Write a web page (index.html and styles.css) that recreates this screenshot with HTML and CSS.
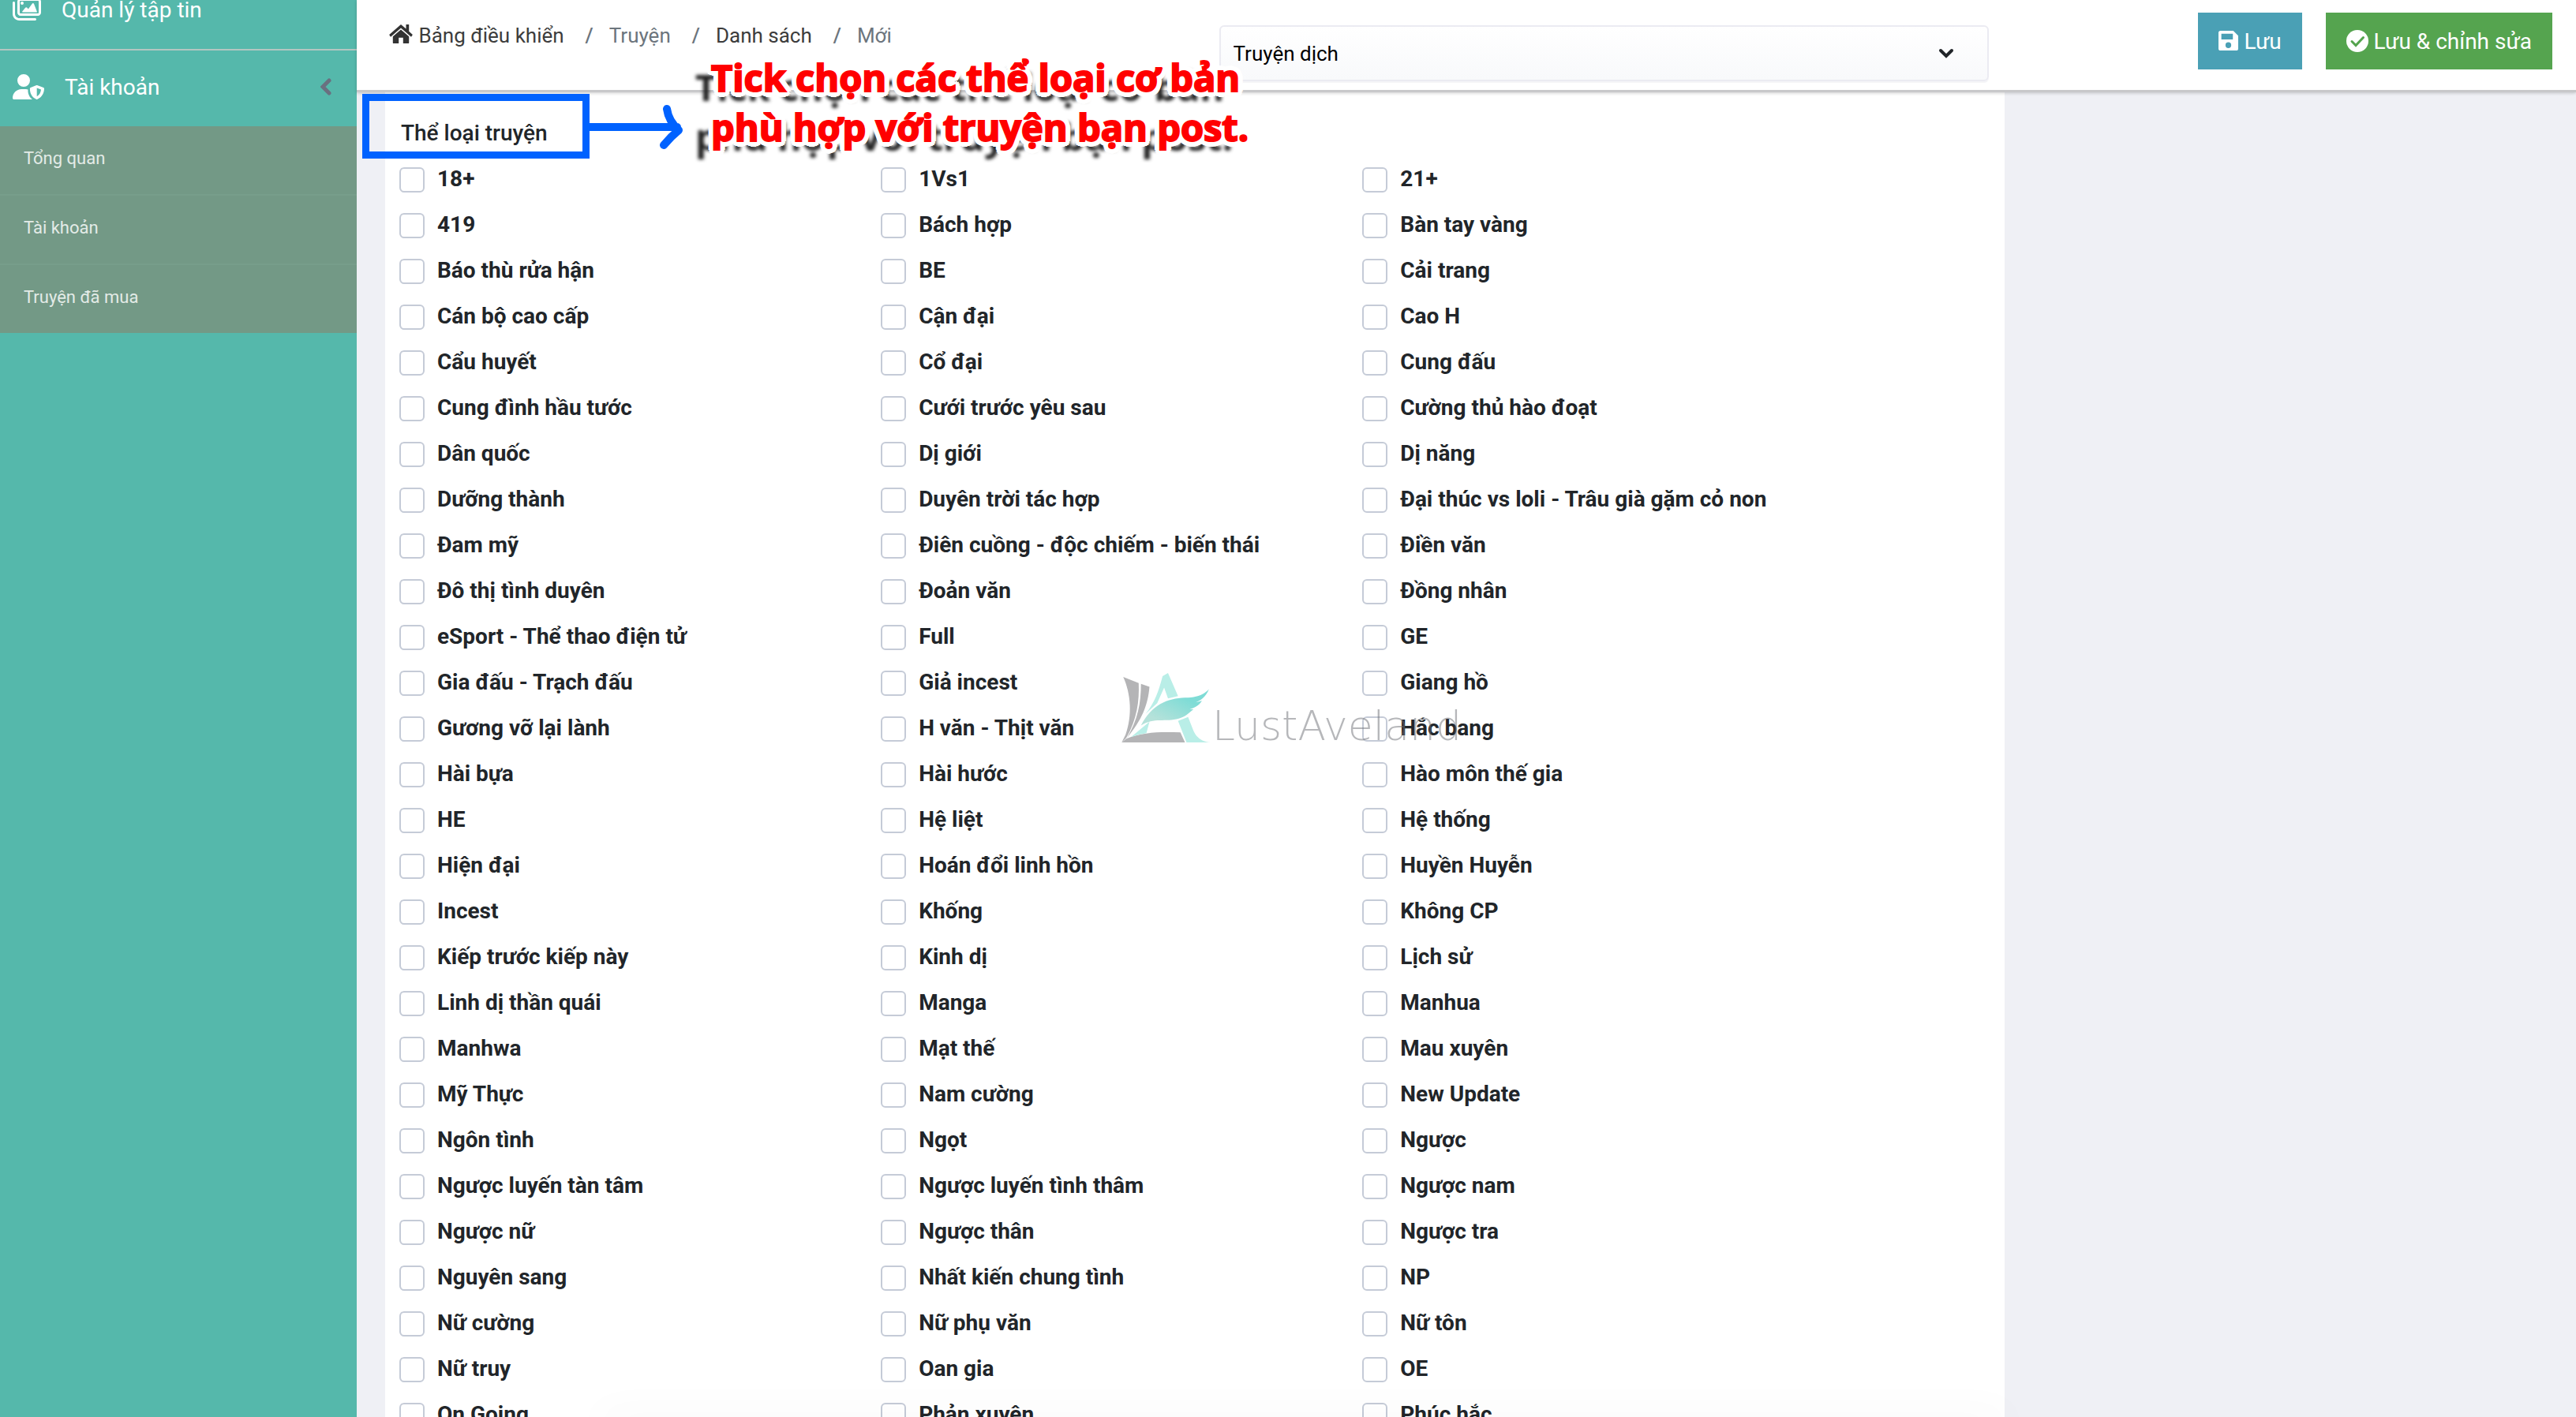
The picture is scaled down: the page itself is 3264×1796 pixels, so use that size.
FILE: index.html
```html
<!DOCTYPE html>
<html lang="vi">
<head>
    <meta charset="UTF-8">
    <meta name="viewport" content="width=device-width, initial-scale=1.0">
    <title>Thể loại truyện</title>
    <link rel="stylesheet" href="styles.css">
</head>
<body>

    <!-- Sidebar -->
    <nav class="sidebar">
        <a class="menu-item menu-files" href="#">
            <svg class="menu-icon" viewBox="0 0 576 512"><path d="M160 32c-35.300 0-64 28.700-64 64V320c0 35.300 28.700 64 64 64H512c35.300 0 64-28.700 64-64V96c0-35.300-28.700-64-64-64H160zm0 48H512c9 0 16 7 16 16V320c0 9-7 16-16 16H160c-9 0-16-7-16-16V96c0-9 7-16 16-16zM396 138.700l-80 108-22-27c-9-11-27-11-36 0l-62 77c-5 7-2 15 6 15H484c8 0 12-8 8-15L432 138.700c-9-13-27-13-36 0zM192 160a32 32 0 1 0 0-64 32 32 0 1 0 0 64zM48 120c0-13.300-10.700-24-24-24S0 106.700 0 120V344c0 75 61 136 136 136H456c13 0 24-11 24-24s-11-24-24-24H136c-49 0-88-39-88-88V120z"/></svg>
            <span>Quản lý tập tin</span>
        </a>
        <a class="menu-item" href="#">
            <svg class="menu-icon menu-icon-user" viewBox="0 0 640 512"><path d="M224 256A128 128 0 1 0 224 0a128 128 0 1 0 0 256zm-46 48C80 304 0 384 0 482c0 17 13 30 30 30H392c11 0 3 0 8-1-65-44-95-126-88-198-13-6-28-9-42-9H178zM497 225c-4-1-9-1-13 0L365 271c-9 4-15 12-15 22 0 78 28 173 128 215 8 4 17 4 25 0 100-42 137-137 137-215 0-10-6-18-15-22L497 225zM576 312c-6 55-28 110-85 141V279l85 33z"/></svg>
            <span>Tài khoản</span>
            <svg class="menu-arrow" viewBox="0 0 14 22"><path d="M11 3L3 11l8 8"/></svg>
        </a>
        <ul class="submenu">
            <li><a href="#">Tổng quan</a></li>
            <li><a href="#">Tài khoản</a></li>
            <li><a href="#">Truyện đã mua</a></li>
        </ul>
    </nav>

    <div class="page">
        <!-- Top bar -->
        <header class="topbar">
            <div class="topbar-left">
                <ol class="breadcrumb">
                    <li><a href="#"><svg class="home-icon" viewBox="0 0 32 28"><path d="M16 1L0 15l2 3L16 6l14 12 2-3-5-4.500V1h-4v6z"/><path d="M16 8L5 17.500V26q0 1 1 1h7v-8h6v8h7q1 0 1-1v-8.500z"/></svg> Bảng điều khiển</a></li>
                    <li>Truyện</li>
                    <li><a href="#">Danh sách</a></li>
                    <li>Mới</li>
                </ol>
                <div class="select-wrap">
                    <select class="type-select" aria-label="Loại truyện">
                        <option>Truyện dịch</option>
                    </select>
                    <svg class="select-arrow" viewBox="0 0 20 14"><path d="M3 3l7 7 7-7"/></svg>
                </div>
            </div>
            <div class="actions">
                <button class="btn btn-info" type="button"><svg class="btn-icon" viewBox="0 0 24 24"><path fill-rule="evenodd" d="M2.500 0H18l6 6v15.500a2.500 2.500 0 0 1-2.500 2.500h-19A2.500 2.500 0 0 1 0 21.500v-19A2.500 2.500 0 0 1 2.500 0zM3.500 3.500v7h14v-7zM12 14a3.500 3.500 0 1 0 0 7 3.500 3.500 0 0 0 0-7z"/></svg> Lưu</button>
                <button class="btn btn-success" type="button"><svg class="btn-icon btn-icon-check" viewBox="0 0 28 28"><circle cx="14" cy="14" r="14"/><path class="check" d="M7 14.500l5 5 9.500-10"/></svg> Lưu &amp; chỉnh sửa</button>
            </div>
        </header>

        <main class="content">
            <section class="card">
                <h2 class="card-title">Thể loại truyện</h2>
                <div class="categories" id="categories"></div>
            </section>
        </main>
    </div>

    <div class="bottom-shadow"></div>

    <!-- Notes drawn over the page -->
    <div class="note-box"></div>
    <svg class="note-arrow" viewBox="0 0 130 76"><path d="M4 38H120M107 15Q109 30 122 42Q112 50 103 61"/></svg>
    <p class="note-text">Tick chọn các thể loại cơ bản<br>phù hợp với truyện bạn post.</p>

    <div class="watermark">
        <svg class="watermark-logo" viewBox="0 0 116 92">
            <defs>
                <linearGradient id="wing" x1="0" y1="1" x2="1" y2="0">
                    <stop offset="0.2" stop-color="#b5e2da"/>
                    <stop offset="0.7" stop-color="#7fdcd6"/>
                </linearGradient>
            </defs>
            <g fill="#b4b4b6">
                <path d="M2 5l20 8c1 23-2 47-16 71L0 90l5-10C14 55 12 27 2 5z"/>
                <path d="M25 14l11 4c-2 24-10 43-29 66 14-24 18-45 18-70z"/>
                <path d="M0 90l6-5c22-9 47-9 70-8l6 13z"/>
            </g>
            <path fill="#b9eee7" d="M53 4l7-4 13 30-13 3-5-14-9 20-15 14C43 38 48 23 53 4zM12 83l24-20-4 15c-7 1-14 3-20 5zM73 62l13-5 7 18c4 9 11 14 22 15H84z"/>
            <path fill="url(#wing)" d="M25 68C39 41 59 33 82 32c15 0 25-4 31-11-3 8-9 14-17 17l8-2c-4 6-9 9-16 11h5c-6 5-11 10-19 12-17 5-32-2-49 9z"/>
        </svg>
        <span>LustAveland</span>
    </div>

    <script src="script.js"></script>
</body>
</html>
```
FILE: styles.css
```css
/* General Styles */
* {
    box-sizing: border-box;
}

body {
    margin: 0;
    display: flex;
    height: 100vh;
    overflow: hidden;
    font-family: Roboto, "Liberation Sans", sans-serif;
    font-size: 26px;
    color: #212529;
    background-color: #eff0f5;
}

a {
    color: inherit;
    text-decoration: none;
}

/* Sidebar */
.sidebar {
    flex: 0 0 452px;
    background-color: #55b8ab;
    color: white;
}

.menu-item {
    display: flex;
    align-items: center;
    height: 96px;
    padding: 0 32px 4px 16px;
    font-size: 28px;
}

.menu-files {
    height: 64px;
    padding-bottom: 38px;
    border-bottom: 2px solid #b3c6c1;
}

.menu-icon {
    width: 36px;
    height: 32px;
    margin-right: 26px;
    fill: white;
}

.menu-icon-user {
    width: 40px;
}

.menu-arrow {
    width: 14px;
    height: 22px;
    margin-left: auto;
    fill: none;
    stroke: #6a7080;
    stroke-width: 5;
    stroke-linecap: round;
}

.submenu {
    margin: 0;
    padding: 0;
    list-style: none;
    background-color: #739986;
    font-size: 22px;
    color: #e3ebe7;
}

.submenu a {
    display: block;
    height: 88px;
    padding: 0 30px;
    line-height: 82px;
    border-bottom: 2px solid #779e8b;
}

.submenu li:last-child a {
    height: 86px;
    border-bottom: none;
}

/* Top bar */
.page {
    flex: 1;
    min-width: 0;
}

.topbar,
.content {
    display: grid;
    grid-template-columns: 17fr 6fr;
    padding-left: 36px;
}

.topbar {
    position: relative;
    height: 117px;
    background-color: white;
    border-bottom: 3px solid #c8c8ca;
    box-shadow: 0 1px 4px rgba(0, 0, 0, 0.2);
}

.topbar-left {
    display: flex;
    justify-content: space-between;
    padding-right: 20px;
}

.breadcrumb {
    display: flex;
    margin: 0;
    padding: 29px 0 0 4px;
    list-style: none;
    line-height: 32px;
    color: #6c757d;
}

.breadcrumb a {
    color: #3c3c3c;
}

.breadcrumb li + li::before {
    content: "/";
    padding: 0 20px 0 27px;
    font-weight: 500;
}

.home-icon {
    width: 32px;
    height: 26px;
    vertical-align: -2px;
    fill: #333;
}

.select-wrap {
    position: relative;
    width: 48%;
    margin-top: 32px;
}

.type-select {
    width: 100%;
    height: 71px;
    padding: 0 16px;
    font: inherit;
    color: black;
    appearance: none;
    background: linear-gradient(white, #f8f9fb);
    border: 2px solid #ebebf2;
    border-radius: 6px;
    box-shadow: 0 2px 1px #f4f4f7;
}

.select-arrow {
    position: absolute;
    right: 44px;
    top: 29px;
    width: 20px;
    height: 14px;
    fill: none;
    stroke: #212529;
    stroke-width: 4;
    stroke-linecap: round;
}

/* Buttons */
.actions {
    display: flex;
    justify-content: flex-end;
    gap: 30px;
    padding: 16px 30px 0 0;
}

.btn {
    height: 72px;
    padding: 0 26px;
    border: none;
    font: inherit;
    font-size: 28px;
    color: white;
    cursor: pointer;
}

.btn-info {
    background-color: #4aa0b5;
}

.btn-success {
    background-color: #55a44f;
}

.btn-icon {
    width: 25px;
    height: 25px;
    vertical-align: -2px;
    fill: white;
}

.btn-icon-check {
    width: 28px;
    height: 28px;
    vertical-align: -4px;
}

.check {
    fill: none;
    stroke: #55a44f;
    stroke-width: 3;
    stroke-linecap: round;
}

/* Category list */
.card {
    padding: 36px 0 0 18px;
    background-color: white;
}

.card-title {
    margin: 0 0 20px;
    padding-left: 2px;
    font-size: 28px;
    font-weight: 500;
    line-height: 32px;
}

.categories {
    display: grid;
    grid-template-columns: repeat(3, 30%);
    grid-auto-rows: 58px;
}

.category {
    display: flex;
    align-items: flex-start;
    gap: 16px;
    padding-top: 7px;
    font-size: 28px;
    font-weight: bold;
    line-height: 30px;
}

.category input {
    flex: none;
    width: 32px;
    height: 32px;
    margin: 0;
    appearance: none;
    background-color: white;
    border: 2px solid #c5cbd7;
    border-radius: 6px;
}

.category input:checked {
    background-color: #55b8ab;
}

.bottom-shadow {
    position: fixed;
    left: 760px;
    right: 720px;
    bottom: -10px;
    height: 10px;
    box-shadow: 0 0 50px rgba(0, 0, 0, 0.08);
    pointer-events: none;
}

/* Notes */
.note-box {
    position: absolute;
    left: 459px;
    top: 119px;
    width: 288px;
    height: 82px;
    border: 9px solid #0062ff;
}

.note-arrow {
    position: absolute;
    left: 738px;
    top: 123px;
    width: 130px;
    height: 76px;
    fill: none;
    stroke: #0062ff;
    stroke-width: 10;
    stroke-linecap: round;
    stroke-linejoin: round;
}

/* White outline around the letters, then the dark shadow below it */
.note-text {
    position: absolute;
    left: 901px;
    top: 67px;
    margin: 0;
    font-family: "Open Sans", "Noto Sans", sans-serif;
    font-size: 47px;
    font-weight: bold;
    line-height: 63px;
    white-space: nowrap;
    color: red;
    -webkit-text-stroke: 2px red;
    text-shadow:
        7px 0 white, -7px 0 white, 0 7px white, 0 -7px white,
        5px 5px white, -5px 5px white, 5px -5px white, -5px -5px white,
        6px 3px white, -6px 3px white, 6px -3px white, -6px -3px white,
        3px 6px white, -3px 6px white, 3px -6px white, -3px -6px white,
        3px 3px white, -3px 3px white,
        -20px 12px 4px #222;
}

/* Watermark */
.watermark {
    position: absolute;
    left: 1420px;
    top: 853px;
    display: flex;
    align-items: flex-end;
    font-family: "DejaVu Sans", sans-serif;
    font-size: 52px;
    font-weight: 200;
    line-height: 46px;
    color: rgba(110, 112, 118, 0.5);
    pointer-events: none;
}

.watermark-logo {
    width: 116px;
    height: 90px;
}
```
FILE: script.js
```javascript
const categories = [
    "18+", "1Vs1", "21+",
    "419", "Bách hợp", "Bàn tay vàng",
    "Báo thù rửa hận", "BE", "Cải trang",
    "Cán bộ cao cấp", "Cận đại", "Cao H",
    "Cẩu huyết", "Cổ đại", "Cung đấu",
    "Cung đình hầu tước", "Cưới trước yêu sau", "Cường thủ hào đoạt",
    "Dân quốc", "Dị giới", "Dị năng",
    "Dưỡng thành", "Duyên trời tác hợp", "Đại thúc vs loli - Trâu già gặm cỏ non",
    "Đam mỹ", "Điên cuồng - độc chiếm - biến thái", "Điền văn",
    "Đô thị tình duyên", "Đoản văn", "Đồng nhân",
    "eSport - Thể thao điện tử", "Full", "GE",
    "Gia đấu - Trạch đấu", "Giả incest", "Giang hồ",
    "Gương vỡ lại lành", "H văn - Thịt văn", "Hắc bang",
    "Hài bựa", "Hài hước", "Hào môn thế gia",
    "HE", "Hệ liệt", "Hệ thống",
    "Hiện đại", "Hoán đổi linh hồn", "Huyền Huyễn",
    "Incest", "Khống", "Không CP",
    "Kiếp trước kiếp này", "Kinh dị", "Lịch sử",
    "Linh dị thần quái", "Manga", "Manhua",
    "Manhwa", "Mạt thế", "Mau xuyên",
    "Mỹ Thực", "Nam cường", "New Update",
    "Ngôn tình", "Ngọt", "Ngược",
    "Ngược luyến tàn tâm", "Ngược luyến tình thâm", "Ngược nam",
    "Ngược nữ", "Ngược thân", "Ngược tra",
    "Nguyên sang", "Nhất kiến chung tình", "NP",
    "Nữ cường", "Nữ phụ văn", "Nữ tôn",
    "Nữ truy", "Oan gia", "OE",
    "On Going", "Phản xuyên", "Phúc hắc"
];

const list = document.getElementById("categories");

categories.forEach(name => {
    const label = document.createElement("label");
    const input = document.createElement("input");
    label.className = "category";
    input.type = "checkbox";
    label.append(input, name);
    list.appendChild(label);
});
```
